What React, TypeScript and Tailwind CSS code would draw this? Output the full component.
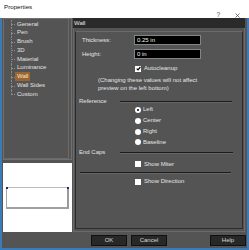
import React from "react";

const TreeRow = ({ label, last, selected }: { label: string; last?: boolean; selected?: boolean }) => (
  <div className="flex h-[8.8px] items-center">
    <div className="relative h-full w-[13px] shrink-0">
      <div
        className={
          last
            ? "absolute left-[7px] top-0 h-1/2 w-0 border-l border-dotted border-[#8a8a8a]"
            : "absolute left-[7px] top-0 h-full w-0 border-l border-dotted border-[#8a8a8a]"
        }
      />
      <div className="absolute left-[7px] top-1/2 w-[4px] border-t border-dotted border-[#8a8a8a]" />
    </div>
    <span
      className={
        selected
          ? "-ml-[2px] bg-[#9c6530] px-[2px] leading-[9px] text-[#f6e7c9]"
          : "leading-[9px] text-[#e2e2e2]"
      }
    >
      {label}
    </span>
  </div>
);

const Check = ({ checked }: { checked?: boolean }) => (
  <div className="flex h-[6px] w-[6px] shrink-0 items-center justify-center bg-white">
    {checked && (
      <svg width="5" height="5" viewBox="0 0 5 5">
        <path d="M0.7 2.6 L2 3.9 L4.4 1" stroke="#000" strokeWidth="1.2" fill="none" />
      </svg>
    )}
  </div>
);

const Radio = ({ checked }: { checked?: boolean }) => (
  <div className="flex h-[6px] w-[6px] shrink-0 items-center justify-center rounded-full bg-white">
    {checked && <div className="h-[2px] w-[2px] rounded-full bg-black" />}
  </div>
);

const Sep = () => (
  <div className="h-[2px] flex-1 border-t border-b border-t-[#1c1c1c] border-b-[#666666]" />
);

const Field = ({ label, value, mt }: { label: string; value: string; mt: string }) => (
  <div className={`flex h-[10px] items-center pl-[6px] ${mt}`}>
    <span className="w-[52px] text-[#e4e4e4]">{label}</span>
    <div className="flex h-[10px] w-[67px] items-center border border-[#858585] bg-black pl-[2px] text-[#f0f0f0]">
      {value}
    </div>
  </div>
);

export default function App() {
  return (
    <div className="flex h-[250px] w-[249px] flex-col overflow-hidden bg-[#545454] font-['Liberation_Sans',Arial,sans-serif] text-[6px] leading-[7px]">
      {/* Title bar */}
      <div className="flex h-[18px] shrink-0 items-start bg-white">
        <span className="pl-[4px] pt-[3px] text-[6.2px] text-[#111]">Properties</span>
        <div className="ml-auto flex items-center gap-[15px] pr-[9px] pt-[12px]">
          <span className="text-[6.5px] leading-[6px] text-[#444]">?</span>
          <svg width="5" height="5" viewBox="0 0 5 5">
            <path d="M0.5 0.5 L4.5 4.5 M4.5 0.5 L0.5 4.5" stroke="#555" strokeWidth="0.8" />
          </svg>
        </div>
      </div>

      {/* Body */}
      <div className="flex flex-1 flex-col border-x-2 border-b-2 border-[#3b7bb8]">
        <div className="flex h-[214px] gap-[1px] pl-[1px]">
          {/* Left column */}
          <div className="flex w-[69px] flex-col gap-[3px]">
            <div className="h-[142px] border border-[#707070]">
              <div className="h-full border-r border-b border-[#6a6a6a] pt-[0.6px] mr-[2px] mb-[1px]">
                <TreeRow label="General" />
                <TreeRow label="Pen" />
                <TreeRow label="Brush" />
                <TreeRow label="3D" />
                <TreeRow label="Material" />
                <TreeRow label="Luminance" />
                <TreeRow label="Wall" selected />
                <TreeRow label="Wall Sides" />
                <TreeRow label="Custom" last />
              </div>
            </div>
            <div className="flex h-[69px] flex-col bg-white px-[3px] pt-[24px]">
              <div className="relative h-[22px] border-t border-l border-r-2 border-b-2 border-t-[#bdbdbd] border-l-[#a8a8a8] border-r-[#9a9a9a] border-b-[#a0a0a0]">
                <div className="absolute -left-[1px] -top-[1px] h-[2px] w-[2px] bg-[#22228c]" />
                <div className="absolute -right-[2px] -top-[1px] h-[2px] w-[2px] bg-[#22228c]" />
              </div>
            </div>
          </div>

          {/* Right column */}
          <div className="flex w-[172px] flex-col">
            <div className="flex h-[10px] items-center bg-[#2a2a2a] pl-[1px] text-[#e8e8e8]">Wall</div>
            <div className="flex flex-1 flex-col border border-t-0 border-[#6b6b6b] px-[1px] pt-[3px] pb-[2px]">
              <div className="flex flex-1 flex-col border border-[#2c2c2c] border-t-[#6a6a6a]">
                <Field label="Thickness:" value="0.25 in" mt="mt-[3px]" />
                <Field label="Height:" value="0 in" mt="mt-[4px]" />
                <div className="mt-[5.5px] flex h-[8px] items-center gap-[3px] pl-[59px] text-[#e4e4e4]">
                  <Check checked />
                  <span>Autocleanup</span>
                </div>
                <div className="mt-[3.5px] pl-[22px] leading-[8px] text-[#e4e4e4]">
                  <div>(Changing these values will not affect</div>
                  <div>preview on the left bottom)</div>
                </div>
                <div className="mt-[6.6px] flex h-[6px] items-center pl-[3px] pr-[10px] text-[#e4e4e4]">
                  <span className="w-[41px] shrink-0">Reference</span>
                  <Sep />
                </div>
                <div className="flex flex-col text-[#e4e4e4]">
                  {["Left", "Center", "Right", "Baseline"].map((r, i) => (
                    <div key={r} className="flex h-[10.8px] items-center gap-[2px] pl-[59px]">
                      <Radio checked={i === 0} />
                      <span>{r}</span>
                    </div>
                  ))}
                </div>
                <div className="mt-[2.2px] flex h-[6px] items-center pl-[3px] pr-[9px] text-[#e4e4e4]">
                  <span className="w-[41px] shrink-0">End Caps</span>
                  <Sep />
                </div>
                <div className="mt-[4.5px] flex h-[8px] items-center gap-[3px] pl-[59px] text-[#e4e4e4]">
                  <Check />
                  <span>Show Miter</span>
                </div>
                <div className="mt-[3.5px] flex pl-[4px] pr-[11px]">
                  <Sep />
                </div>
                <div className="mt-[4px] flex h-[8px] items-center gap-[3px] pl-[59px] text-[#e4e4e4]">
                  <Check />
                  <span>Show Direction</span>
                </div>
              </div>
            </div>
          </div>
        </div>

        {/* Buttons */}
        <div className="mt-[3px] flex h-[11px] pr-[1px] text-[#d8d8d8]">
          <div className="ml-[89px] flex w-[36px] items-center justify-center border border-[#111] bg-[#282828]">OK</div>
          <div className="ml-[4px] flex w-[36px] items-center justify-center border border-[#111] bg-[#282828]">Cancel</div>
          <div className="ml-auto flex w-[36px] items-center justify-center border border-[#111] bg-[#282828]">Help</div>
        </div>
      </div>
    </div>
  );
}
